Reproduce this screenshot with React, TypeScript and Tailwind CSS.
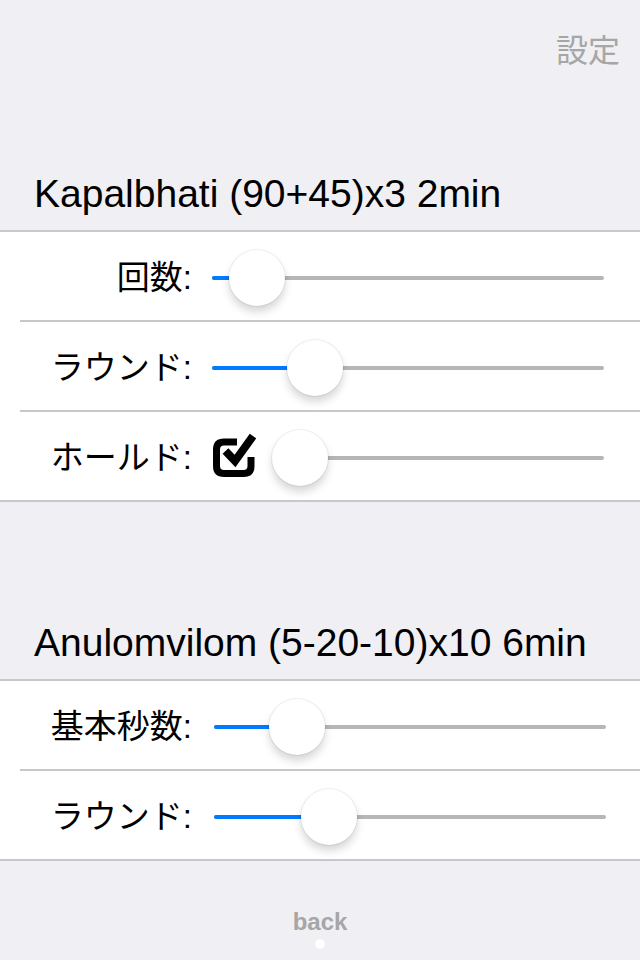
import React from "react";

const FONT = { fontFamily: '"Liberation Sans", "Noto Sans CJK JP", sans-serif' };

function Slider({ width, pos }: { width: number; pos: number }) {
  return (
    <div className="relative h-[56px]" style={{ width }}>
      <div className="absolute left-0 right-0 top-[26px] h-[4px] rounded-full bg-[#b6b6b6]" />
      {pos > 28 ? (
        <div
          className="absolute left-0 top-[26px] h-[4px] rounded-full bg-[#007aff]"
          style={{ width: pos }}
        />
      ) : null}
      <div
        className="absolute top-0 h-[56px] w-[56px] rounded-full bg-white shadow-[0_6px_9px_rgba(0,0,0,0.16),0_0_0_1px_rgba(0,0,0,0.06)]"
        style={{ left: pos - 28 }}
      />
    </div>
  );
}

function CheckIcon() {
  return (
    <svg width="46" height="48" viewBox="0 0 46 48" className="block">
      <path
        d="M25 10 H12 Q4.5 10 4.5 17.5 V34 Q4.5 41.5 12 41.5 H31.5 Q39 41.5 39 34 V25"
        fill="none"
        stroke="#000"
        strokeWidth="7"
        strokeLinecap="butt"
      />
      <path
        d="M13.5 19 L23 29 L41 4"
        fill="none"
        stroke="#000"
        strokeWidth="8"
        strokeLinecap="butt"
        strokeLinejoin="miter"
      />
    </svg>
  );
}

function Row({
  label,
  children,
}: {
  label: string;
  children: React.ReactNode;
}) {
  return (
    <div className="flex h-[88px] items-center pt-[4px] bg-white">
      <div className="w-[192px] text-right text-[33px] leading-[40px] text-black">{label}</div>
      {children}
    </div>
  );
}

function Sep() {
  return (
    <div className="bg-white">
      <div className="ml-[20px] h-[2px] bg-[#c8c7cc]" />
    </div>
  );
}

function Header({ title }: { title: string }) {
  return (
    <div className="flex h-[100px] items-end pb-[14px] pl-[34px]">
      <div className="text-[39px] leading-[44px] text-black">{title}</div>
    </div>
  );
}

export default function App() {
  return (
    <div className="flex h-[960px] w-[640px] flex-col overflow-hidden bg-[#efeff4]" style={FONT}>
      <div className="flex h-[130px] justify-end pr-[20px] pt-[31px]">
        <div className="text-[32px] leading-[40px] text-[#a6a6a6]">設定</div>
      </div>

      <Header title="Kapalbhati (90+45)x3 2min" />
      <div className="h-[2px] bg-[#c8c7cc]" />
      <Row label="回数:">
        <div className="ml-[20px]">
          <Slider width={392} pos={45} />
        </div>
      </Row>
      <Sep />
      <Row label="ラウンド:">
        <div className="ml-[20px]">
          <Slider width={392} pos={103} />
        </div>
      </Row>
      <Sep />
      <Row label="ホールド:">
        <div className="ml-[20px] -mt-[4px]">
          <CheckIcon />
        </div>
        <div className="ml-[14px]">
          <Slider width={332} pos={28} />
        </div>
      </Row>
      <div className="h-[2px] bg-[#c8c7cc]" />

      <div className="h-[77px]" />

      <Header title="Anulomvilom (5-20-10)x10 6min" />
      <div className="h-[2px] bg-[#c8c7cc]" />
      <Row label="基本秒数:">
        <div className="ml-[22px]">
          <Slider width={392} pos={83} />
        </div>
      </Row>
      <Sep />
      <Row label="ラウンド:">
        <div className="ml-[22px]">
          <Slider width={392} pos={115} />
        </div>
      </Row>
      <div className="h-[2px] bg-[#c8c7cc]" />

      <div className="flex flex-1 flex-col items-center pt-[47px]">
        <div className="text-[24px] font-bold leading-[28px] text-[#a6a6a6]">back</div>
        <div className="mt-[3px] h-[10px] w-[10px] rounded-full bg-white" />
      </div>
    </div>
  );
}
